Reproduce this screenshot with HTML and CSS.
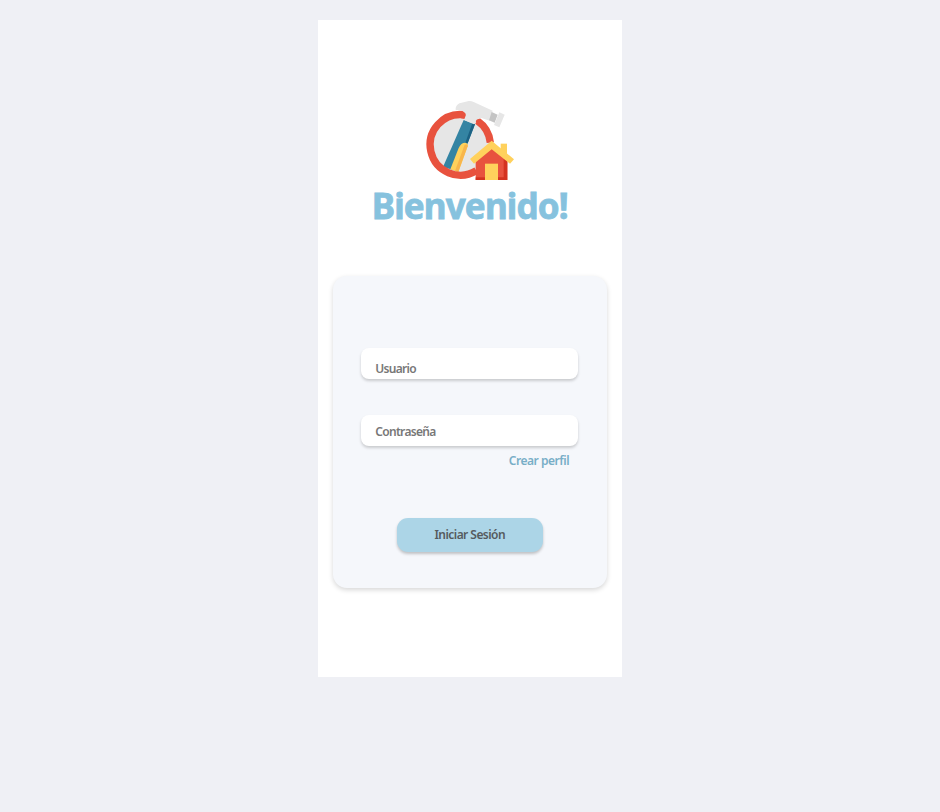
FILE: index.html
```html
<!DOCTYPE html>
<html lang="es">
<head>
<meta charset="utf-8">
<title>Bienvenido</title>
<link rel="stylesheet" href="styles.css">
</head>
<body>
<main class="screen">
  <svg class="logo" viewBox="0 0 330 300" aria-hidden="true">
    <circle cx="136" cy="164" r="92" fill="#e6e6e6"/>
    <path d="M146 90L180 103L126 243L84 231Z" fill="#3484a3"/>
    <path d="M172 100L180 103L158 160L151 158Z" fill="#1c6284"/>
    <path d="M106 238L131 174Q138 158 151 158Q160 160 158 169L130 246Z" fill="#ffd15c"/>
    <path d="M120 243L149 164L158 163L158 169L130 246Z" fill="#f8b64c"/>
    <path d="M146 74A91 91 0 1 0 184 242M187 92A91 91 0 0 1 226 158" fill="none" stroke="#e8523e" stroke-width="22"/>
    <path d="M140 62L152 67Q156 70 153 76L148 87L138 85Z" fill="#e8523e"/>
    <path d="M122 54Q125 40 140 38L161 33Q168 32 176 36L233 62L224 92L199 84L183 91L177 103L149 91Q155 78 151 70Q142 58 122 60Z" fill="#e6e6e6"/>
    <path d="M183 97Q181 90 190 87L202 91L192 103Z" fill="#e8523e"/>
    <path d="M230 66L248 74L239 98L222 91Z" fill="#c4c4c4"/>
    <path d="M253 67L269 74L253 112L237 105Z" fill="#e6e6e6"/>
    <path d="M257 161H276V199H257Z" fill="#ffd15c"/>
    <path d="M182 207L230 170L277 211V270H182Z" fill="#e8523e"/>
    <path d="M266 207L277 211V270H249V262H266Z" fill="#d43320"/>
    <path d="M182 262H210V270H182Z" fill="#d43320"/>
    <path d="M210 221H249V270H210Z" fill="#ffd15c"/>
    <path d="M230 152L297 208L285 221L230 178L177 221L165 207Z" fill="#ffd15c"/>
  </svg>
  <h1 class="title">Bienvenido!</h1>
  <form class="card">
    <input class="field user" type="text" placeholder="Usuario" aria-label="Usuario">
    <input class="field pass" type="password" placeholder="Contraseña" aria-label="Contraseña">
    <a class="create" href="#">Crear perfil</a>
    <button class="submit" type="button">Iniciar Sesión</button>
  </form>
</main>
</body>
</html>
```
FILE: styles.css
```css
* { box-sizing: border-box; }
body {
  margin: 0;
  padding-top: 20px;
  background: #eff0f5;
  font-family: "Noto Sans", sans-serif;
}
.screen {
  width: 303.5px;
  height: 657px;
  margin-left: 318px;
  padding: 70px 14.5px 0;
  display: flex;
  flex-direction: column;
  align-items: center;
  background: #fff;
}
.logo {
  display: block;
  width: 110px;
  height: 100px;
  flex: none;
}
.title {
  margin: -8px 0 0;
  height: 48px;
  line-height: 48px;
  font-size: 35px;
  font-weight: 700;
  letter-spacing: -0.85px;
  -webkit-text-stroke: 0.8px #86c2de;
  color: #86c2de;
  white-space: nowrap;
}
.card {
  width: 274px;
  height: 312px;
  margin-top: 46px;
  padding: 72px 28.5px 0;
  display: flex;
  flex-direction: column;
  background: #f5f7fb;
  border-radius: 14px;
  box-shadow: 0 2px 5px rgba(0, 0, 0, 0.16);
}
.field, .submit, .create {
  font-family: inherit;
  font-size: 12px;
  font-weight: 600;
  letter-spacing: -0.68px;
}
.field {
  width: 217px;
  height: 31px;
  flex: none;
  border: 0;
  border-radius: 8px;
  background: #fff;
  box-shadow: 0 2px 3px rgba(0, 0, 0, 0.18);
}
.field::placeholder { color: #777; opacity: 1; }
.user { padding: 9px 14px 0; }
.pass { padding: 2px 14px 0; margin-top: 36px; }
.create {
  align-self: flex-end;
  margin: 6px 9px 0 0;
  line-height: 17px;
  letter-spacing: -0.45px;
  color: #78aec7;
  text-decoration: none;
}
.submit {
  width: 146px;
  height: 34px;
  margin: 49px auto 0;
  padding: 0 0 1px;
  border: 0;
  border-radius: 11px;
  background: #acd5e7;
  color: #555b5e;
  letter-spacing: -0.55px;
  box-shadow: 0 2px 3px rgba(0, 0, 0, 0.22);
}
```
